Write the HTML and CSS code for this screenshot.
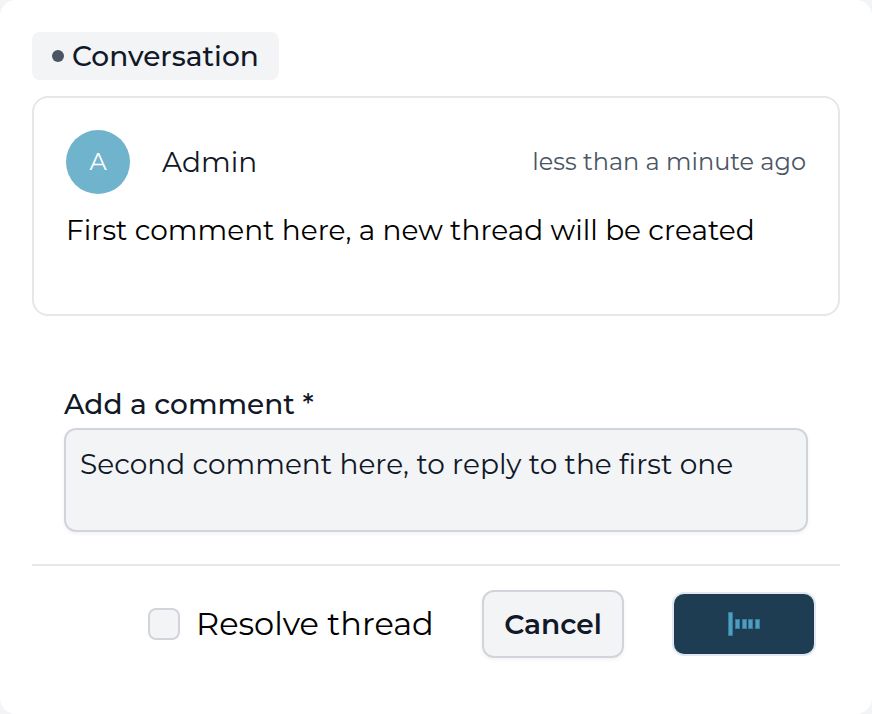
FILE: index.html
```html
<!DOCTYPE html>
<html lang="en">
<head>
<meta charset="utf-8">
<title>Conversation</title>
<link rel="stylesheet" href="styles.css">
</head>
<body>
<main class="dialog">
  <div class="badge"><span class="dot"></span>Conversation</div>
  <article class="comment">
    <header class="comment-head">
      <span class="avatar">A</span>
      <span class="author">Admin</span>
      <time class="time">less than a minute ago</time>
    </header>
    <p class="body">First comment here, a new thread will be created</p>
  </article>
  <section class="field">
    <div class="label">Add a comment *</div>
    <div class="input">Second comment here, to reply to the first one</div>
  </section>
  <footer class="actions">
    <span class="checkbox"></span>
    <span class="resolve">Resolve thread</span>
    <button class="cancel">Cancel</button>
    <button class="submit" aria-label="Submit"><svg width="32" height="24"><path d="M0 0h5v24H0zM7 7h5v10H7zM14 7h5v10h-5zM20 7h5v10h-5zM27 7h5v10h-5z" fill="#367b98"/><path d="M1 1h3v22H1zM8 8h3v8H8zM15 8h3v8h-3zM21 8h3v8h-3zM28 8h3v8h-3z" fill="#4c9fc2"/></svg></button>
  </footer>
</main>
</body>
</html>
```
FILE: styles.css
```css
* { box-sizing: border-box; }
body { margin: 0; background: #f3f4f6; font: 400 28px/40px Montserrat, "Open Sans", sans-serif; color: #111827; }
.dialog { height: 714px; padding: 32px; background: #fff; border-radius: 16px; overflow: hidden; white-space: nowrap; }
.badge { display: flex; align-items: center; width: 247px; height: 48px; padding-left: 20px; border-radius: 8px; background: #f3f4f6; font-weight: 500; }
.dot { width: 12px; height: 12px; margin-right: 8px; border-radius: 50%; background: #4b5563; }
.comment { height: 220px; margin-top: 16px; padding: 32px; border: 2px solid #e5e7eb; border-radius: 16px; }
.comment-head { display: flex; align-items: center; height: 64px; }
.avatar { width: 64px; height: 64px; border-radius: 50%; background: #6fb3cd; color: #fff; font-size: 24px; line-height: 63px; text-align: center; }
.author { margin-left: 32px; }
.time { margin-left: auto; color: #4b5563; font-size: 24px; }
.body { margin: 16px 0 0; color: #000; }
.field { margin: 68px 32px 0; }
.label { font-weight: 500; }
.input { height: 104px; margin-top: 4px; padding: 14px; border: 2px solid #d1d5db; border-radius: 12px; background: #f3f4f6; box-shadow: 0 2px 4px #0000000d; }
.actions { display: flex; align-items: center; height: 118px; margin-top: 32px; border-top: 2px solid #e5e7eb; padding-left: 116px; }
.checkbox { width: 32px; height: 32px; border: 2px solid #d1d5db; border-radius: 8px; background: #f3f4f6; }
.resolve { width: 238px; margin-left: 16px; color: #000; font-size: 32px; }
button { display: grid; place-items: center; padding: 0; font: inherit; }
.cancel { width: 142px; height: 68px; margin-left: 48px; border: 2px solid #d1d5db; border-radius: 12px; background: #f3f4f6; color: #111827; font-weight: 600; box-shadow: 0 2px 4px #0000000d; }
.submit { width: 144px; height: 64px; margin-left: 48px; border: 2px solid #e2e8f0; border-radius: 12px; background: #1e3d52; }
```
